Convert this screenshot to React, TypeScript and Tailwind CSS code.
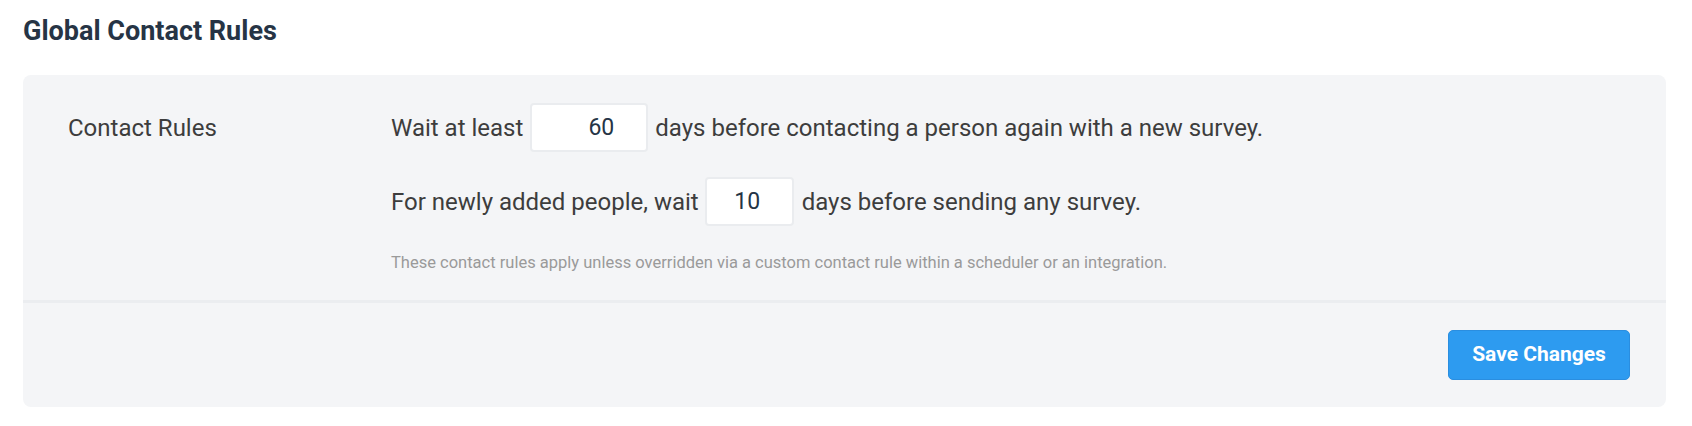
import React, { useState } from 'react';

export default function App() {
  const [waitDays, setWaitDays] = useState('60');
  const [newDays, setNewDays] = useState('10');

  return (
    <div className="min-h-screen bg-white pl-[23px] pr-[26px] pt-[15px] font-['Roboto',sans-serif]">
      {/* Page heading */}
      <h2 className="text-[27px] leading-[32px] font-bold text-[#263445]">Global Contact Rules</h2>

      {/* Settings card */}
      <div className="mt-[28px] rounded-lg bg-[#f4f5f7]">
        <div className="flex pt-[28px] pb-[25px] pl-[45px]">
          <div className="w-[323px] shrink-0 h-[49px] flex items-center text-[24px] text-[#3d3d3d]">
            Contact Rules
          </div>

          <div className="flex flex-col text-[24px] text-[#3d3d3d]">
            <div className="flex items-center h-[49px]">
              <span>Wait at least</span>
              <input
                value={waitDays}
                onChange={(e) => setWaitDays(e.target.value)}
                className="mx-[7px] w-[118px] h-[49px] rounded border-2 border-[#eaecef] bg-white pl-6 text-center text-[23px] text-[#253446] outline-none"
              />
              <span>days before contacting a person again with a new survey.</span>
            </div>

            <div className="flex items-center h-[49px] mt-[25px]">
              <span>For newly added people, wait</span>
              <input
                value={newDays}
                onChange={(e) => setNewDays(e.target.value)}
                className="ml-[6px] mr-[8px] w-[89px] h-[49px] rounded border-2 border-[#eaecef] bg-white pr-1 text-center text-[23px] text-[#253446] outline-none"
              />
              <span>days before sending any survey.</span>
            </div>

            <p className="mt-[24px] text-[16.5px] leading-[25px] text-[#9a9a9a]">
              These contact rules apply unless overridden via a custom contact rule within a scheduler or an integration.
            </p>
          </div>
        </div>

        {/* Footer with action */}
        <div className="flex justify-end border-t-[3px] border-[#ebedf0] pt-[27px] pb-[27px] pr-[36px]">
          <button className="h-[50px] w-[182px] rounded-[5px] border border-[#2a8ee0] bg-[#2d9bf0] text-[21px] font-bold text-white">
            Save Changes
          </button>
        </div>
      </div>
    </div>
  );
}
